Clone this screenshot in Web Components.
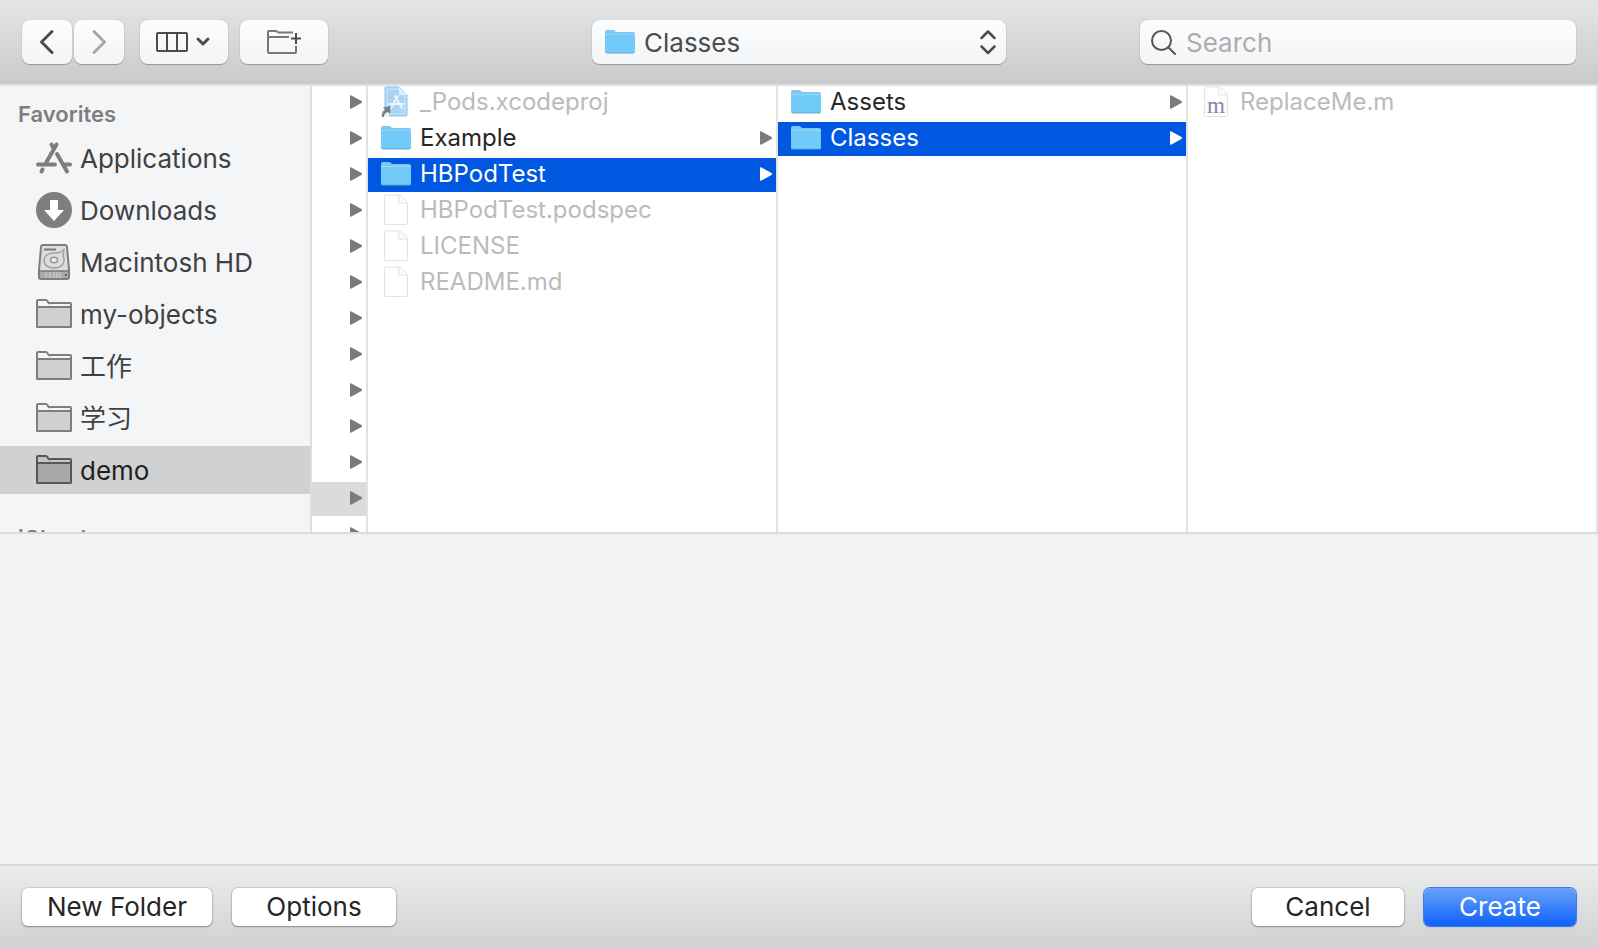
<!DOCTYPE html>
<html lang="en">
<head>
<meta charset="utf-8">
<title>Create</title>
<style>
  html, body {
    height: 100%;
    margin: 0;
  }

  body {
    font-family: Inter, "Noto Sans CJK SC", sans-serif;
    color: #262626;
    background: #f0f2f4;
  }
</style>
</head>
<body>

<file-dialog>
  <dialog-toolbar slot="toolbar">
    <tool-button label="Back" icon="back" size="small"></tool-button>
    <tool-button label="Forward" icon="forward" size="small" off></tool-button>
    <tool-button label="View as columns" icon="columns" class="view"></tool-button>
    <tool-button label="New folder" icon="new-folder"></tool-button>
    <folder-popup slot="location" value="Classes"></folder-popup>
    <search-field slot="search" placeholder="Search"></search-field>
  </dialog-toolbar>

  <side-bar slot="sidebar">
    <side-heading>Favorites</side-heading>
    <side-item icon="apps">Applications</side-item>
    <side-item icon="downloads">Downloads</side-item>
    <side-item icon="disk">Macintosh HD</side-item>
    <side-item icon="side-folder">my-objects</side-item>
    <side-item icon="side-folder">工作</side-item>
    <side-item icon="side-folder">学习</side-item>
    <side-item icon="side-folder" selected>demo</side-item>
    <side-heading>iCloud</side-heading>
  </side-bar>

  <file-column>
    <file-row arrow></file-row>
    <file-row arrow></file-row>
    <file-row arrow></file-row>
    <file-row arrow></file-row>
    <file-row arrow></file-row>
    <file-row arrow></file-row>
    <file-row arrow></file-row>
    <file-row arrow></file-row>
    <file-row arrow></file-row>
    <file-row arrow></file-row>
    <file-row arrow></file-row>
    <file-row arrow state="path"></file-row>
    <file-row arrow></file-row>
  </file-column>
  <file-column>
    <file-row icon="project" state="off">_Pods.xcodeproj</file-row>
    <file-row icon="folder" arrow>Example</file-row>
    <file-row icon="folder" arrow state="selected">HBPodTest</file-row>
    <file-row icon="document" state="off">HBPodTest.podspec</file-row>
    <file-row icon="document" state="off">LICENSE</file-row>
    <file-row icon="document" state="off">README.md</file-row>
  </file-column>
  <file-column>
    <file-row icon="folder" arrow>Assets</file-row>
    <file-row icon="folder" arrow state="selected">Classes</file-row>
  </file-column>
  <file-column>
    <file-row icon="source" state="off">ReplaceMe.m</file-row>
  </file-column>

  <dialog-footer slot="footer">
    <push-button size="large">New Folder</push-button>
    <push-button size="medium">Options</push-button>
    <push-button slot="end">Cancel</push-button>
    <push-button slot="end" primary>Create</push-button>
  </dialog-footer>
</file-dialog>

<script>
const icons = {
  'back': `<svg width="16" height="26" viewBox="0 0 16 26" fill="none" stroke="#4b4c4e" stroke-width="3" stroke-linecap="round" stroke-linejoin="round"><path d="M13 2.5 2.5 13 13 23.5"/></svg>`,
  'forward': `<svg width="16" height="26" viewBox="0 0 16 26" fill="none" stroke="#a5a6a8" stroke-width="3" stroke-linecap="round" stroke-linejoin="round"><path d="M3 2.5 13.5 13 3 23.5"/></svg>`,
  'columns': `<svg width="56" height="22" viewBox="0 0 56 22" fill="none" stroke="#4b4c4e" stroke-width="2"><rect x="1" y="2" width="30" height="18" rx="1"/><path d="M11 2v18M21 2v18"/><path d="m42 8 5 5 5-5" stroke-width="3" stroke-linecap="round" stroke-linejoin="round"/></svg>`,
  'new-folder': `<svg width="34" height="26" viewBox="0 0 34 26" fill="none" stroke="#707173" stroke-width="2"><path d="M26 3.500H11.500L9 2H2q-1 0-1 1v20q0 1 1 1h26q1 0 1-1v-6M1 10q0-2 2-2h19" stroke="#77787a"/><path d="M29 4v11M24 9.500h10" stroke="#4b4c4e"/></svg>`,
  'updown': `<svg width="16" height="26" viewBox="0 0 16 26" fill="none" stroke="#4b4c4e" stroke-width="2.500" stroke-linecap="round" stroke-linejoin="round"><path d="m1.500 9 6.500-6.500L14.500 9M1.500 17.500 8 24l6.500-6.500"/></svg>`,
  'search': `<svg width="26" height="26" viewBox="0 0 26 26" fill="none" stroke="#55565a" stroke-width="2" stroke-linecap="round"><circle cx="10.500" cy="11.500" r="9.500"/><path d="m17.500 18.500 6.500 6.500"/></svg>`,
  'folder': `<svg width="30" height="24" viewBox="0 0 30 24"><path d="M0 21V2q0-2 2-2h6q1 0 2 1l1 1h17q2 0 2 2v17z" fill="#7cc8ef"/><path d="M0 5h29q1 0 1 1v16q0 1-1 1H1q-1 0-1-1z" fill="#71cbf9"/><path d="M0 4.500h30" stroke="#93dafa"/><path d="M1 23h28" stroke="#60a9d3"/></svg>`,
  'document': `<svg width="30" height="32" viewBox="0 0 30 32" fill="#fff" stroke="#e2e2e2"><path d="M3.500 2q0-1 1-1H18q7 3 8.500 9v19.500q0 1-1 1h-21q-1 0-1-1z"/><path d="M17.500 1v1q0 8 1 8 4-3 8 0" fill="#fafafa"/></svg>`,
  'source': `<svg width="30" height="32" viewBox="0 0 30 32" fill="#fff" stroke="#e4e4e6"><path d="M3.500 2q0-1 1-1H18q7 3 8.500 9v19.500q0 1-1 1h-21q-1 0-1-1z"/><path d="M17.500 1v1q0 8 1 8 4-3 8 0" fill="#fafafa"/><text x="15" y="27" text-anchor="middle" font-family="Liberation Serif, serif" font-size="23" fill="#8783b3" stroke="none">m</text></svg>`,
  'project': `<svg width="30" height="32" viewBox="0 0 30 32" fill="none"><path d="M4 1h14l8 8v21H4z" fill="#a9d4f6" stroke="#8fc4ee"/><path d="M6 3h11l7 7v18H6z" stroke="#cce6fb"/><path d="M18 1v8h8z" fill="#ddeefb"/><path d="m17 10-7 12M14 10l7 12M8 18h15" stroke="#e9f5fe" stroke-width="2" stroke-linecap="round"/><path d="M0 31V23h8v8z" fill="#edf5fb"/><path d="M1 31q-.5-5 3-7.500L2 21.500 9.500 20 9 28l-2-2q-4 1-4 5z" fill="#777d83"/></svg>`,
  'apps': `<svg width="36" height="36" viewBox="0 0 36 36" fill="none" stroke="#7d7e80" stroke-width="4" stroke-linecap="round"><path d="M20.500 4.500 10.500 22M15.500 4.500l2 3.500M21 14l10 17.500M2 24.500h17M27.500 24.500H34M6.500 29.500 5.500 31.500"/></svg>`,
  'downloads': `<svg width="36" height="36" viewBox="0 0 36 36"><circle cx="18" cy="18" r="18" fill="#7d7e80"/><path d="M14 8h8v10h6L18 29 8 18h6z" fill="#fff"/></svg>`,
  'disk': `<svg width="36" height="36" viewBox="0 0 36 36" fill="none"><path d="M5 3q.2-2 2-2h22q1.800 0 2 2l2 23v7q0 2-2 2H5q-2 0-2-2v-7z" fill="#dcdddf" stroke="#7d7e80" stroke-width="2"/><path d="M4 27h28v7H4z" fill="#aaabad"/><path d="M3 27h30" stroke="#77787a" stroke-width="1.500"/><path d="M8 5.500h12" stroke="#77787a" stroke-width="2"/><path d="M28 5c-2 4-6 4-9 4-7 0-11 3-11 7.500S12 24 18 24s10-3 10-8q0-3-1-4z" stroke="#a0a1a3" stroke-width="1.500"/><ellipse cx="18" cy="16" rx="3.500" ry="2.800" fill="#ededee" stroke="#929395" stroke-width="1.500"/><path d="M10 28v6M14 28v6M18 28v6M21 28v6M24 28v6" stroke="#d0d1d2"/><path d="M30 30v2" stroke="#666" stroke-width="2"/></svg>`,
  'side-folder': `<svg width="36" height="30" viewBox="0 0 36 30" stroke="currentColor" stroke-width="2" stroke-linejoin="round"><path d="M1 27V2q0-1 1-1h8q1 0 2 2t3 1h19q1 0 1 1v22q0 1-1 1H2q-1 0-1-1z" fill="var(--folder-top, #f4f5f7)"/><path d="M1 9q0-1 1-1h32q1 0 1 1v18q0 1-1 1H2q-1 0-1-1z" fill="var(--folder-fill, #cfd0d2)"/></svg>`,
  'arrow': `<svg width="12" height="14" viewBox="0 0 12 14" fill="currentColor"><path d="M0 1q0-1 1-.8L11.500 6q1 1 0 2L1 13.800Q0 14 0 13z"/></svg>`
};

// every element builds its shadow root the same way
function attach(element, html) {
  element.attachShadow({ mode: 'open' });
  const template = document.createElement('template');
  template.innerHTML = html;
  element.shadowRoot.appendChild(template.content.cloneNode(true));
}

class UiIcon extends HTMLElement {
  connectedCallback() {
    if (this.shadowRoot) return;
    attach(this, `
      <style>
        :host { display: inline-flex; flex: none; }
        svg { display: block; }
      </style>
      ${icons[this.getAttribute('name')] || ''}`);
    this.setAttribute('aria-hidden', 'true');
  }
}

class FileDialog extends HTMLElement {
  constructor() {
    super();
    attach(this, `
      <style>
        :host {
          display: flex;
          flex-direction: column;
          min-height: 100vh;
        }
        .browser {
          display: grid;
          grid-template-columns: 312px 56px;
          grid-auto-flow: column;
          grid-auto-columns: minmax(0, 1fr);
          height: 446px;
          background: #fff;
          border-bottom: 2px solid #dadbdc;
          overflow: hidden;
        }
        .preview { flex: 1; background: #f0f2f4; }
      </style>
      <slot name="toolbar"></slot>
      <main class="browser">
        <slot name="sidebar"></slot>
        <slot></slot>
      </main>
      <section class="preview" aria-label="Preview"></section>
      <slot name="footer"></slot>`);
  }
}

class DialogToolbar extends HTMLElement {
  constructor() {
    super();
    attach(this, `
      <style>
        :host {
          display: grid;
          grid-template-columns: 1fr 414px 1fr;
          padding: 20px 22px;
          background: linear-gradient(#e4e6e6, #c9cacb) padding-box;
          border-bottom: 2px solid #dfe0e1;
        }
        .tools { display: flex; gap: 2px; }
        ::slotted(.view) { margin: 0 10px 0 14px; }
        .search { display: flex; justify-content: flex-end; }
      </style>
      <div class="tools"><slot></slot></div>
      <slot name="location"></slot>
      <div class="search"><slot name="search"></slot></div>`);
  }
}

const fieldStyle = `
  border: 0;
  border-radius: 8px;
  background: linear-gradient(#fcfdfe, #f2f4f6);
  box-shadow: 0 0 1px rgba(0, 0, 0, .3), 0 1px 1px rgba(0, 0, 0, .25);
`;

class ToolButton extends HTMLElement {
  connectedCallback() {
    if (this.shadowRoot) return;
    attach(this, `
      <style>
        :host { display: block; width: 88px; }
        :host([size=small]) { width: 50px; }
        button {
          display: flex;
          align-items: center;
          justify-content: center;
          width: 100%;
          height: 44px;
          padding: 0;
          ${fieldStyle}
        }
      </style>
      <button type="button" aria-label="${this.getAttribute('label')}"${this.hasAttribute('off') ? ' disabled' : ''}>
        <ui-icon name="${this.getAttribute('icon')}"></ui-icon>
      </button>`);
  }
}

class FolderPopup extends HTMLElement {
  connectedCallback() {
    if (this.shadowRoot) return;
    attach(this, `
      <style>
        :host { display: grid; align-items: center; }
        select, ui-icon { grid-area: 1 / 1; }
        select {
          appearance: none;
          width: 100%;
          height: 44px;
          padding: 2px 48px 0 52px;
          font: 26px/32px Inter, sans-serif;
          color: #4b4c4e;
          ${fieldStyle}
        }
        ui-icon { z-index: 1; pointer-events: none; }
        .folder { justify-self: start; margin-left: 13px; }
        .updown { justify-self: end; margin-right: 10px; }
      </style>
      <select aria-label="Location"><option>${this.getAttribute('value')}</option></select>
      <ui-icon class="folder" name="folder"></ui-icon>
      <ui-icon class="updown" name="updown"></ui-icon>`);
  }
}

class SearchField extends HTMLElement {
  connectedCallback() {
    if (this.shadowRoot) return;
    attach(this, `
      <style>
        :host { display: block; width: 436px; }
        label {
          display: flex;
          align-items: center;
          gap: 9px;
          height: 44px;
          padding: 0 11px;
          ${fieldStyle}
        }
        input {
          flex: 1;
          min-width: 0;
          padding: 2px 0 0;
          border: 0;
          outline: 0;
          background: none;
          font: 26px/32px Inter, sans-serif;
          color: #4b4c4e;
        }
        input::placeholder { color: #acadaf; opacity: 1; }
      </style>
      <label>
        <ui-icon name="search"></ui-icon>
        <input type="text" aria-label="Search" placeholder="${this.getAttribute('placeholder')}">
      </label>`);
  }
}

class SideBar extends HTMLElement {
  constructor() {
    super();
    attach(this, `
      <style>
        :host {
          display: block;
          min-height: 0;
          overflow: hidden;
          background: #f4f5f7;
          border-right: 2px solid #dcddde;
        }
        nav { display: flex; flex-direction: column; gap: 4px; }
      </style>
      <nav aria-label="Locations"><slot></slot></nav>`);
  }
}

class SideHeading extends HTMLElement {
  constructor() {
    super();
    attach(this, `
      <style>
        :host {
          display: block;
          padding: 14px 18px 2px;
          font-size: 22px;
          line-height: 28px;
          font-weight: 600;
          color: #7d7e80;
        }
        :host(:not(:first-child)) { padding-top: 26px; }
      </style>
      <slot></slot>`);
  }
}

class SideItem extends HTMLElement {
  connectedCallback() {
    if (this.shadowRoot) return;
    attach(this, `
      <style>
        :host { display: block; color: #404143; }
        :host([selected]) {
          color: #1f2022;
          background: #d0d1d3;
          --folder-top: #c4c5c7;
          --folder-fill: #a8a9aa;
        }
        button {
          display: flex;
          align-items: center;
          gap: 8px;
          width: 100%;
          height: 48px;
          padding: 0 8px 0 36px;
          border: 0;
          background: none;
          color: inherit;
          font: inherit;
          font-size: 26px;
          line-height: 32px;
          white-space: nowrap;
        }
        span { padding-top: 2px; }
        ui-icon { color: #7d7e80; }
        :host([selected]) ui-icon { color: #565759; }
      </style>
      <button type="button">
        <ui-icon name="${this.getAttribute('icon')}"></ui-icon>
        <span><slot></slot></span>
      </button>`);
  }
}

class FileColumn extends HTMLElement {
  constructor() {
    super();
    attach(this, `
      <style>
        :host {
          display: flex;
          flex-direction: column;
          gap: 2px;
          min-height: 0;
          overflow: hidden;
          border-right: 2px solid #e2e2e3;
        }
      </style>
      <slot></slot>`);
  }
}

class FileRow extends HTMLElement {
  connectedCallback() {
    if (this.shadowRoot) return;
    const icon = this.getAttribute('icon');
    const off = this.getAttribute('state') === 'off';
    attach(this, `
      <style>
        :host { display: block; flex: none; }
        :host([state=off]) { color: #bbb; }
        :host([state=path]) { background: #dadbdc; }
        :host([state=selected]) { background: #0058e1; color: #fff; }
        button {
          display: flex;
          align-items: center;
          gap: 9px;
          width: 100%;
          height: 34px;
          padding: 0 4px 2px 13px;
          border: 0;
          background: none;
          color: inherit;
          font: inherit;
          font-size: 24px;
          line-height: 30px;
          text-align: left;
          white-space: nowrap;
        }
        .arrow { margin-left: auto; color: #7b7b7c; }
        :host([state=selected]) .arrow { color: #fff; }
      </style>
      <button type="button"${icon ? '' : ' aria-label="Folder"'}${off ? ' disabled' : ''}>
        ${icon ? `<ui-icon name="${icon}"></ui-icon>` : ''}
        <slot></slot>
        ${this.hasAttribute('arrow') ? '<ui-icon class="arrow" name="arrow"></ui-icon>' : ''}
      </button>`);
  }
}

class DialogFooter extends HTMLElement {
  constructor() {
    super();
    attach(this, `
      <style>
        :host {
          display: flex;
          justify-content: space-between;
          padding: 22px;
          background: linear-gradient(#ebecec, #d0d1d2) padding-box;
          border-top: 2px solid #d7d8d9;
        }
        div { display: flex; gap: 20px; }
      </style>
      <div><slot></slot></div>
      <div><slot name="end"></slot></div>`);
  }
}

class PushButton extends HTMLElement {
  constructor() {
    super();
    attach(this, `
      <style>
        :host { display: block; width: 152px; }
        :host([size=medium]) { width: 164px; }
        :host([size=large]) { width: 190px; }
        button {
          width: 100%;
          height: 38px;
          padding: 0;
          border: 0;
          border-radius: 6px;
          background: #fff;
          color: #262626;
          font: inherit;
          font-size: 26px;
          line-height: 32px;
          box-shadow: 0 0 1px 1px rgba(0, 0, 0, .1), 0 1px 2px rgba(0, 0, 0, .3);
        }
        :host([primary]) button {
          color: #fff;
          background: linear-gradient(#69a2fa, #0f61fd);
          box-shadow: 0 0 0 1px #3c7eea, 0 1px 2px rgba(0, 0, 0, .3);
        }
      </style>
      <button type="button"><slot></slot></button>`);
  }
}

customElements.define('ui-icon', UiIcon);
customElements.define('file-dialog', FileDialog);
customElements.define('dialog-toolbar', DialogToolbar);
customElements.define('tool-button', ToolButton);
customElements.define('folder-popup', FolderPopup);
customElements.define('search-field', SearchField);
customElements.define('side-bar', SideBar);
customElements.define('side-heading', SideHeading);
customElements.define('side-item', SideItem);
customElements.define('file-column', FileColumn);
customElements.define('file-row', FileRow);
customElements.define('dialog-footer', DialogFooter);
customElements.define('push-button', PushButton);
</script>
</body>
</html>
